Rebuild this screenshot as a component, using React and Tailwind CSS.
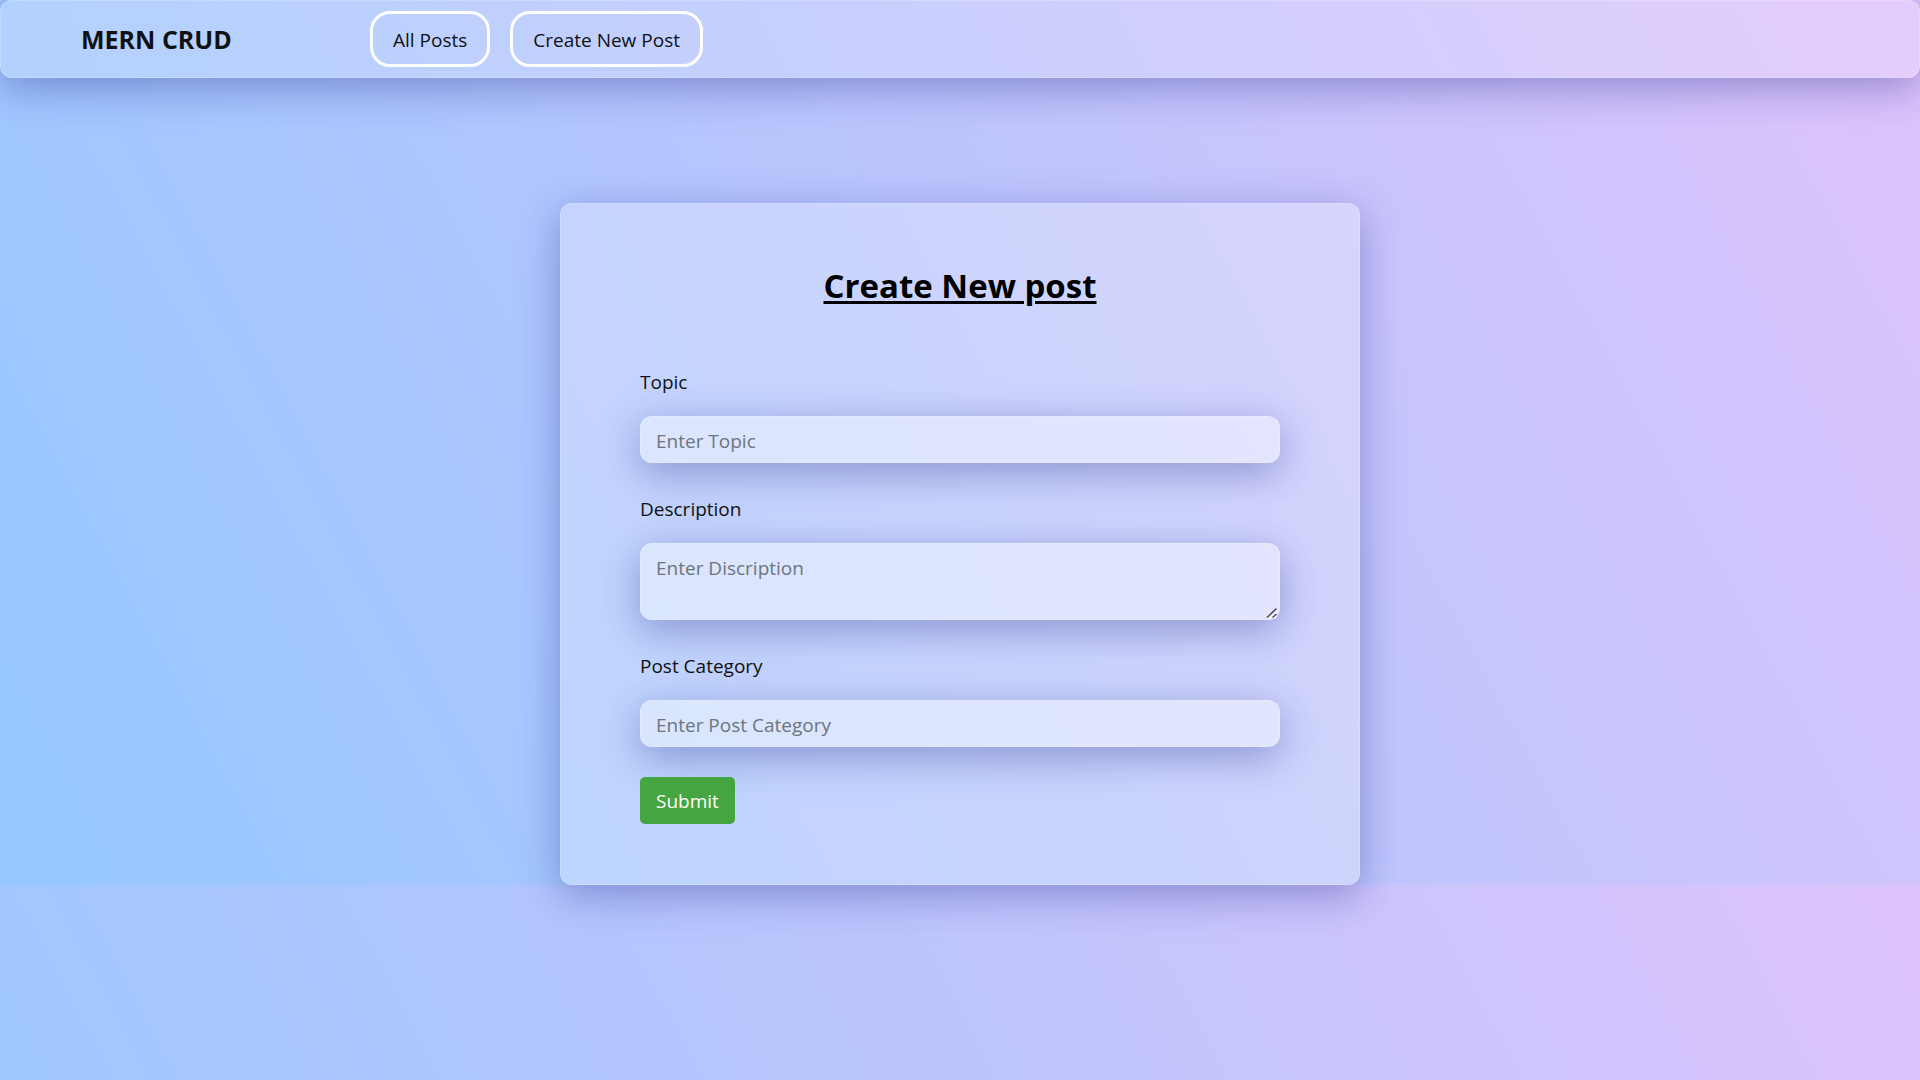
const glass =
  "border border-white/20 rounded-xl shadow-[0_10px_40px_0_rgba(31,38,135,0.37)]";

const field =
  "block w-full px-[15px] text-[19px] leading-[30px] text-gray-700 placeholder:text-[#6c757d] outline-none bg-white/40 " +
  glass;

const navLink =
  "rounded-[20px] border-[3px] border-white px-5 pt-[11px] pb-[9px] leading-[30px]";

function Field({ id, label, children }) {
  return (
    <div className="mb-[30px]">
      <label htmlFor={id} className="mb-[19px] block pt-px leading-[30px]">
        {label}
      </label>
      {children}
    </div>
  );
}

function ResizeGrip() {
  return (
    <svg
      viewBox="0 0 12 12"
      aria-hidden="true"
      className="pointer-events-none absolute right-[2px] bottom-[1px] h-3 w-3"
      fill="none"
    >
      <path d="M3 11.5L11 4.500M8 11.5L11 9" stroke="#fff" strokeOpacity="0.8" strokeWidth="1.5" />
      <path d="M1 10.500L10.500 1.500M6.500 10.500L10.500 7" stroke="#4b4c55" strokeWidth="1.5" />
    </svg>
  );
}

export default function App() {
  return (
    <div className="min-h-screen bg-[linear-gradient(62deg,#94c8ff_0%,#dec3fc_100%)] bg-[length:100%_885px] bg-repeat-y font-['Open_Sans','Segoe_UI',sans-serif] text-[19px] text-[#101114]">
      <header className={"flex h-[78px] items-center bg-white/18 pl-20 " + glass}>
        <a href="#home" className="w-[289px] text-[25px] font-bold leading-[38px]">
          MERN CRUD
        </a>
        <nav className="flex gap-5">
          <a href="#posts" className={navLink}>
            All Posts
          </a>
          <a href="#create" className={navLink}>
            Create New Post
          </a>
        </nav>
      </header>

      <main className="flex justify-center pt-[125px]">
        <form className={"w-[800px] max-w-full bg-white/26 px-[79px] pb-[60px] pt-[61px] " + glass}>
          <h1 className="mb-[59px] text-center text-[33px] font-bold leading-[42px] text-black underline decoration-[3px] underline-offset-[3px]">
            Create New post
          </h1>
          <Field id="topic" label="Topic">
            <input id="topic" type="text" placeholder="Enter Topic" className={"h-[47px] pt-[2px] " + field} />
          </Field>
          <Field id="description" label="Description">
            <div className="relative">
              <textarea
                id="description"
                placeholder="Enter Discription"
                className={"h-[77px] resize-none py-[9px] " + field}
              />
              <ResizeGrip />
            </div>
          </Field>
          <Field id="category" label="Post Category">
            <input id="category" type="text" placeholder="Enter Post Category" className={"h-[47px] pt-[2px] " + field} />
          </Field>
          <button type="button" className="h-[47px] rounded-[5px] bg-[#45a540] px-4 pt-px leading-[30px] text-white">
            Submit
          </button>
        </form>
      </main>
    </div>
  );
}
